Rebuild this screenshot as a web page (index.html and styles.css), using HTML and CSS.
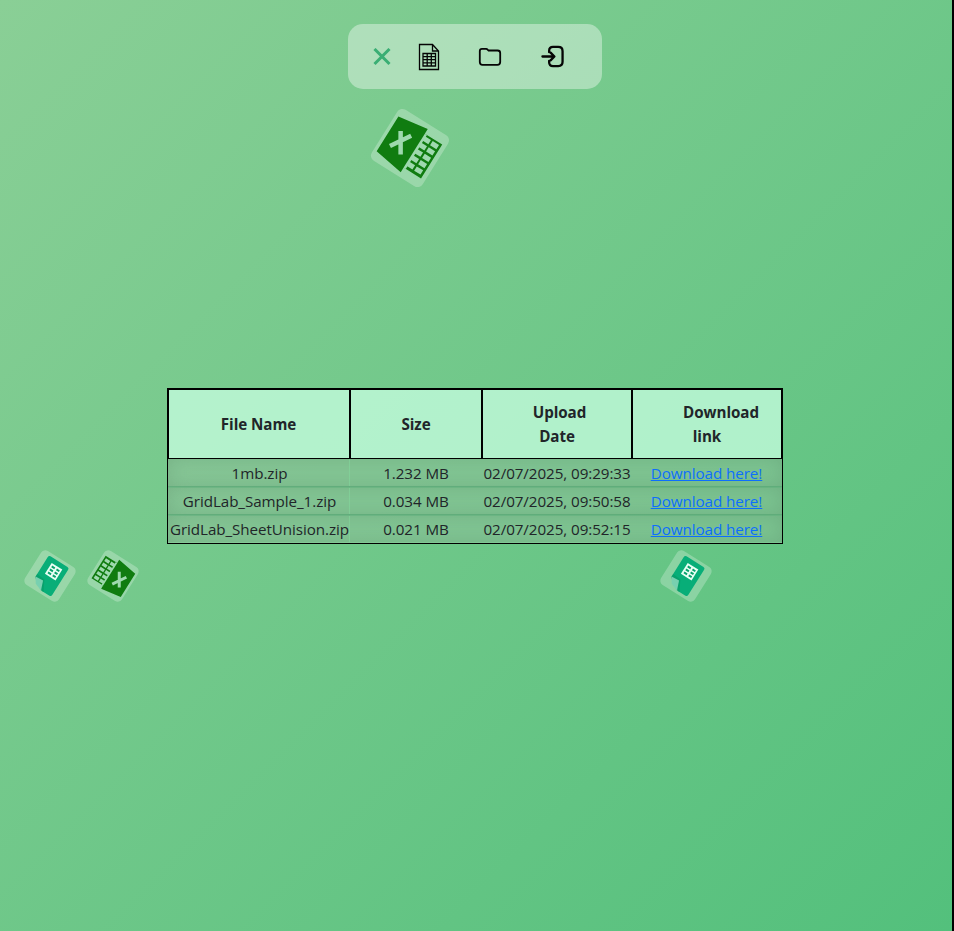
FILE: index.html
```html
<!DOCTYPE html>
<html lang="en">
<head>
<meta charset="utf-8">
<title>GridLab files</title>
<link rel="stylesheet" href="styles.css">
</head>
<body>
<svg class="defs" width="0" height="0" aria-hidden="true">
  <symbol id="excel" viewBox="-30 -30 60 60">
    <path fill="#107c10" d="M-26.500-20.500 5-25.500V-20H25.500V20H5V25.500L-26.500 20.500Z"/>
    <path stroke="#9ed9ae" stroke-width="5" fill="none" d="M6-15.500H13.500M6-8H13.500M6-.5H13.500M6 7H13.500M6 14.500H13.500M15.500-15.500H23M15.500-8H23M15.500-.5H23M15.500 7H23M15.500 14.500H23"/>
    <path fill="#9ed9ae" d="M5-20H7.500V20H5Z"/>
    <path stroke="#9ed9ae" stroke-width="4.500" fill="none" d="M-17-9.500-4.500 10.500M-5.500-11-18 9"/>
  </symbol>
  <symbol id="sheets" viewBox="-20 -20 40 40">
    <path fill="#08ae78" d="M-10-17H10Q12-17 12-15V15Q12 17 10 17H1L-12 8V-15Q-12-17-10-17Z"/>
    <path fill="#07935f" opacity=".5" d="M-12 5-3 6 3 17H0L-12 9Z"/>
    <path fill="#78d0b0" d="M-12 8-3.500 7.500 0 17-8 14Z"/>
    <path fill="#e9fff5" d="M-5.500-12H7V.8H-5.500Z"/>
    <path stroke="#08a36d" stroke-width="2" d="M-3.600-9H0M2-9H5.400M-3.600-5.500H0M2-5.500H5.400M-3.600-2H0M2-2H5.400"/>
  </symbol>
</svg>

<nav class="toolbar">
  <svg class="ic close" viewBox="0 0 18 18"><path d="M1.500 1 16.500 16M16.500 1 1.500 16"/></svg>
  <svg class="ic doc" viewBox="0 0 22 28"><path d="M1.500 1.500H14.500L20.500 8V26.500H1.500ZM14.500 1.500V8H20.500"/><path class="grid" d="M5 10.500H17.500V23H5ZM5 13.600H17.500M5 16.700H17.500M5 19.800H17.500M9.200 10.500V23M13.300 10.500V23"/></svg>
  <svg class="ic folder" viewBox="0 0 24 20"><path d="M4 1.900H8.200Q9 1.900 9.600 2.600L10.600 3.500H19.600Q22.200 3.500 22.200 6V15Q22.200 17.800 19.400 17.800H4.500Q1.800 17.800 1.800 15V4Q1.800 1.900 4 1.900Z"/></svg>
  <svg class="ic login" viewBox="0 0 24 24"><path d="M8.500 7.500V6Q8.500 2 12.500 2H18Q22.500 2 22.500 6.500V17.500Q22.500 22 18 22H12.500Q8.500 22 8.500 18V16.500M1.500 12H13.500M10 8 14 12 10 16"/></svg>
</nav>

<main>
  <div class="table" role="table">
    <div class="row head" role="row">
      <div class="cell" role="columnheader"><span>File Name</span></div>
      <div class="cell" role="columnheader"><span>Size</span></div>
      <div class="cell" role="columnheader"><span class="up">Upload</span><span>Date</span></div>
      <div class="cell" role="columnheader"><span class="down">Download</span><span>link</span></div>
    </div>
    <div class="row" role="row"><div class="cell">1mb.zip</div><div class="cell">1.232 MB</div><div class="cell">02/07/2025, 09:29:33</div><div class="cell"><a href="#">Download here!</a></div></div>
    <div class="row" role="row"><div class="cell">GridLab_Sample_1.zip</div><div class="cell">0.034 MB</div><div class="cell">02/07/2025, 09:50:58</div><div class="cell"><a href="#">Download here!</a></div></div>
    <div class="row" role="row"><div class="cell">GridLab_SheetUnision.zip</div><div class="cell">0.021 MB</div><div class="cell">02/07/2025, 09:52:15</div><div class="cell"><a href="#">Download here!</a></div></div>
  </div>
</main>

<svg class="float big"><use href="#excel"/></svg>
<svg class="float small one"><use href="#sheets"/></svg>
<svg class="float small two"><use href="#excel"/></svg>
<svg class="float small three"><use href="#sheets"/></svg>
</body>
</html>
```
FILE: styles.css
```css
* { box-sizing: border-box; }
body {
  margin: 0;
  height: 931px;
  overflow: hidden;
  position: relative;
  border-right: 2px solid #000;
  background: linear-gradient(135deg, #8acf96 0%, #53c07c 100%) padding-box;
  font: 15.2px/24px "Open Sans", "Noto Sans", sans-serif;
  letter-spacing: -.07px;
  color: #212529;
}
body::before { content: ""; display: table; }
.defs { position: absolute; }
.toolbar {
  width: 254px;
  height: 65px;
  margin: 24px 0 0 348px;
  padding-left: 25px;
  display: flex;
  align-items: center;
  border-radius: 15px;
  background: rgba(255, 255, 255, .38);
}
.ic { fill: none; stroke: #050505; flex: none; }
.close { width: 18px; height: 18px; stroke: #3aae74; stroke-width: 3; }
.doc { width: 22px; height: 28px; margin-left: 27px; stroke-width: 1.3; }
.folder { width: 24px; height: 20px; margin-left: 38px; stroke-width: 1.8; }
.login { width: 23px; height: 23px; margin-left: 39px; stroke-width: 2.4; stroke-linecap: round; stroke-linejoin: round; }

.table { width: 616px; margin: 299px 0 0 167px; border: 1px solid #000; }
.row {
  display: grid;
  grid-template-columns: 183px 132px 150px 149px;
  height: 28px;
  background: rgba(158, 198, 164, .42);
  box-shadow: inset 0 0 20px rgba(70, 110, 85, .25);
  border-bottom: 1px solid rgba(80, 160, 110, .65);
}
.row + .row + .row { border-top: 1px solid rgba(80, 160, 110, .45); }
.row:last-child { border-bottom-color: transparent; }
.cell {
  display: flex;
  flex-direction: column;
  align-items: center;
  justify-content: center;
  white-space: nowrap;
}
.row:not(.head) .cell { padding: 1px 2px 0 0; }
.row + .row + .row .cell { padding-top: 0; }
.row:not(.head) .cell:first-child {
  margin-right: 1px;
  padding-right: 0;
  padding-left: 2px;
  border-right: 1px solid;
  border-image: linear-gradient(#000 1px, rgba(130, 215, 155, .6) 1px calc(100% - 1px), #000 calc(100% - 1px)) 1;
}
.head {
  height: 70px;
  background: rgba(200, 255, 225, .75);
  box-shadow: inset 1px 1px #000, inset -1px 0 #000;
  border-bottom: 1px solid #000;
  font-weight: 700;
}
.head .cell { border-right: 2px solid #000; padding-top: 1px; }
.head .cell:last-child { border-right-width: 1px; }
.up { padding-left: 5px; }
.down { padding-left: 28px; }
a { color: #0d6efd; text-decoration: underline; }

.float {
  position: absolute;
  background: rgba(255, 255, 255, .25);
  transform: rotate(32deg);
}
.big { left: 380px; top: 118px; width: 60px; height: 60px; border-radius: 6px; }
.small { top: 556px; width: 40px; height: 40px; border-radius: 5px; }
.one { left: 30px; }
.two { left: 93px; transform: rotate(212deg); }
.three { left: 666px; }
```
